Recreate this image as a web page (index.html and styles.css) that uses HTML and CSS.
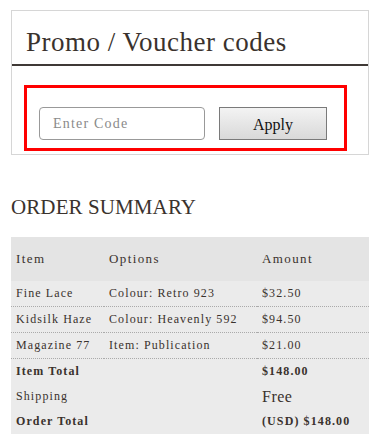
FILE: index.html
```html
<!DOCTYPE html>
<html lang="en">
<head>
  <meta charset="UTF-8" />
  <title>Checkout — Promo codes</title>
  <link rel="stylesheet" href="styles.css">
</head>
<body>

  <!-- promo / voucher box -->
  <div class="promo-box">
    <h2 class="promo-title">Promo / Voucher codes</h2>
    <div class="promo-form">
      <input type="text" class="code-input" placeholder="Enter Code" />
      <button class="apply-btn">Apply</button>
    </div>
  </div>

  <!-- order summary -->
  <h3 class="summary-title">ORDER SUMMARY</h3>
  <table class="summary">
    <thead>
      <tr><th>Item</th><th>Options</th><th>Amount</th></tr>
    </thead>
    <tbody>
      <tr class="line"><td>Fine Lace</td><td>Colour: Retro 923</td><td>$32.50</td></tr>
      <tr class="line"><td>Kidsilk Haze</td><td>Colour: Heavenly 592</td><td>$94.50</td></tr>
      <tr class="line"><td>Magazine 77</td><td>Item: Publication</td><td>$21.00</td></tr>
      <tr class="total"><td>Item Total</td><td></td><td>$148.00</td></tr>
      <tr><td>Shipping</td><td></td><td class="free">Free</td></tr>
      <tr class="total"><td>Order Total</td><td></td><td>(USD) $148.00</td></tr>
    </tbody>
  </table>

</body>
</html>
```

FILE: styles.css
```css
body {
  margin:0;
  padding:10px 12px 0 11px;
  font-family: "Liberation Serif", "DejaVu Serif", serif;
  color:#3a322d;
  background:#fff;
}
.promo-box {
  border:1px solid #d6d6d6;
  padding-bottom:3px;
}
.promo-title {
  margin:0;
  padding:16px 14px 0;
  height:37px;
  font-size:27px;
  font-weight:normal;
  letter-spacing:0.5px;
  border-bottom:2px solid #3f3936;
}
.promo-form {
  margin:19px 21px 0 12px;
  border:3px solid #f00;
  padding:19px 12px 8px;
  display:flex;
  gap:14px;
}
.code-input {
  width:166px;
  height:33px;
  box-sizing:border-box;
  border:1px solid #999;
  border-radius:4px;
  padding:0 13px;
  font-family:inherit;
  font-size:14px;
  letter-spacing:1.2px;
  color:#333;
}
.code-input::placeholder { color:#8a8a8a; }
.apply-btn {
  width:108px;
  height:33px;
  border:1px solid #7a7a7a;
  background:linear-gradient(#f3f3f3, #d9d9d9);
  font-family:"Liberation Serif", serif;
  font-size:16px;
  color:#111;
  padding:2px 0 0;
}
.summary-title {
  margin:39px 0 0;
  font-size:21px;
  font-weight:normal;
  letter-spacing:0.1px;
  line-height:26px;
}
.summary {
  width:100%;
  margin-top:17px;
  border-collapse:collapse;
  font-size:12px;
  letter-spacing:1.1px;
}
.summary th {
  background:#e4e4e4;
  height:44px;
  padding:0 0 0 5px;
  text-align:left;
  font-weight:normal;
  font-size:13px;
  letter-spacing:1.4px;
}
.summary th:first-child, .summary td:first-child { width:88px; }
.summary th:nth-child(2), .summary td:nth-child(2) { width:148px; }
.summary td {
  background:#ebebeb;
  height:25px;
  padding:0 0 0 5px;
}
.summary tr.line td { border-bottom:1px dotted #aaa; }
.summary tr.total td { font-weight:bold; }
.summary td.free { font-size:16px; letter-spacing:0.5px; }
```
